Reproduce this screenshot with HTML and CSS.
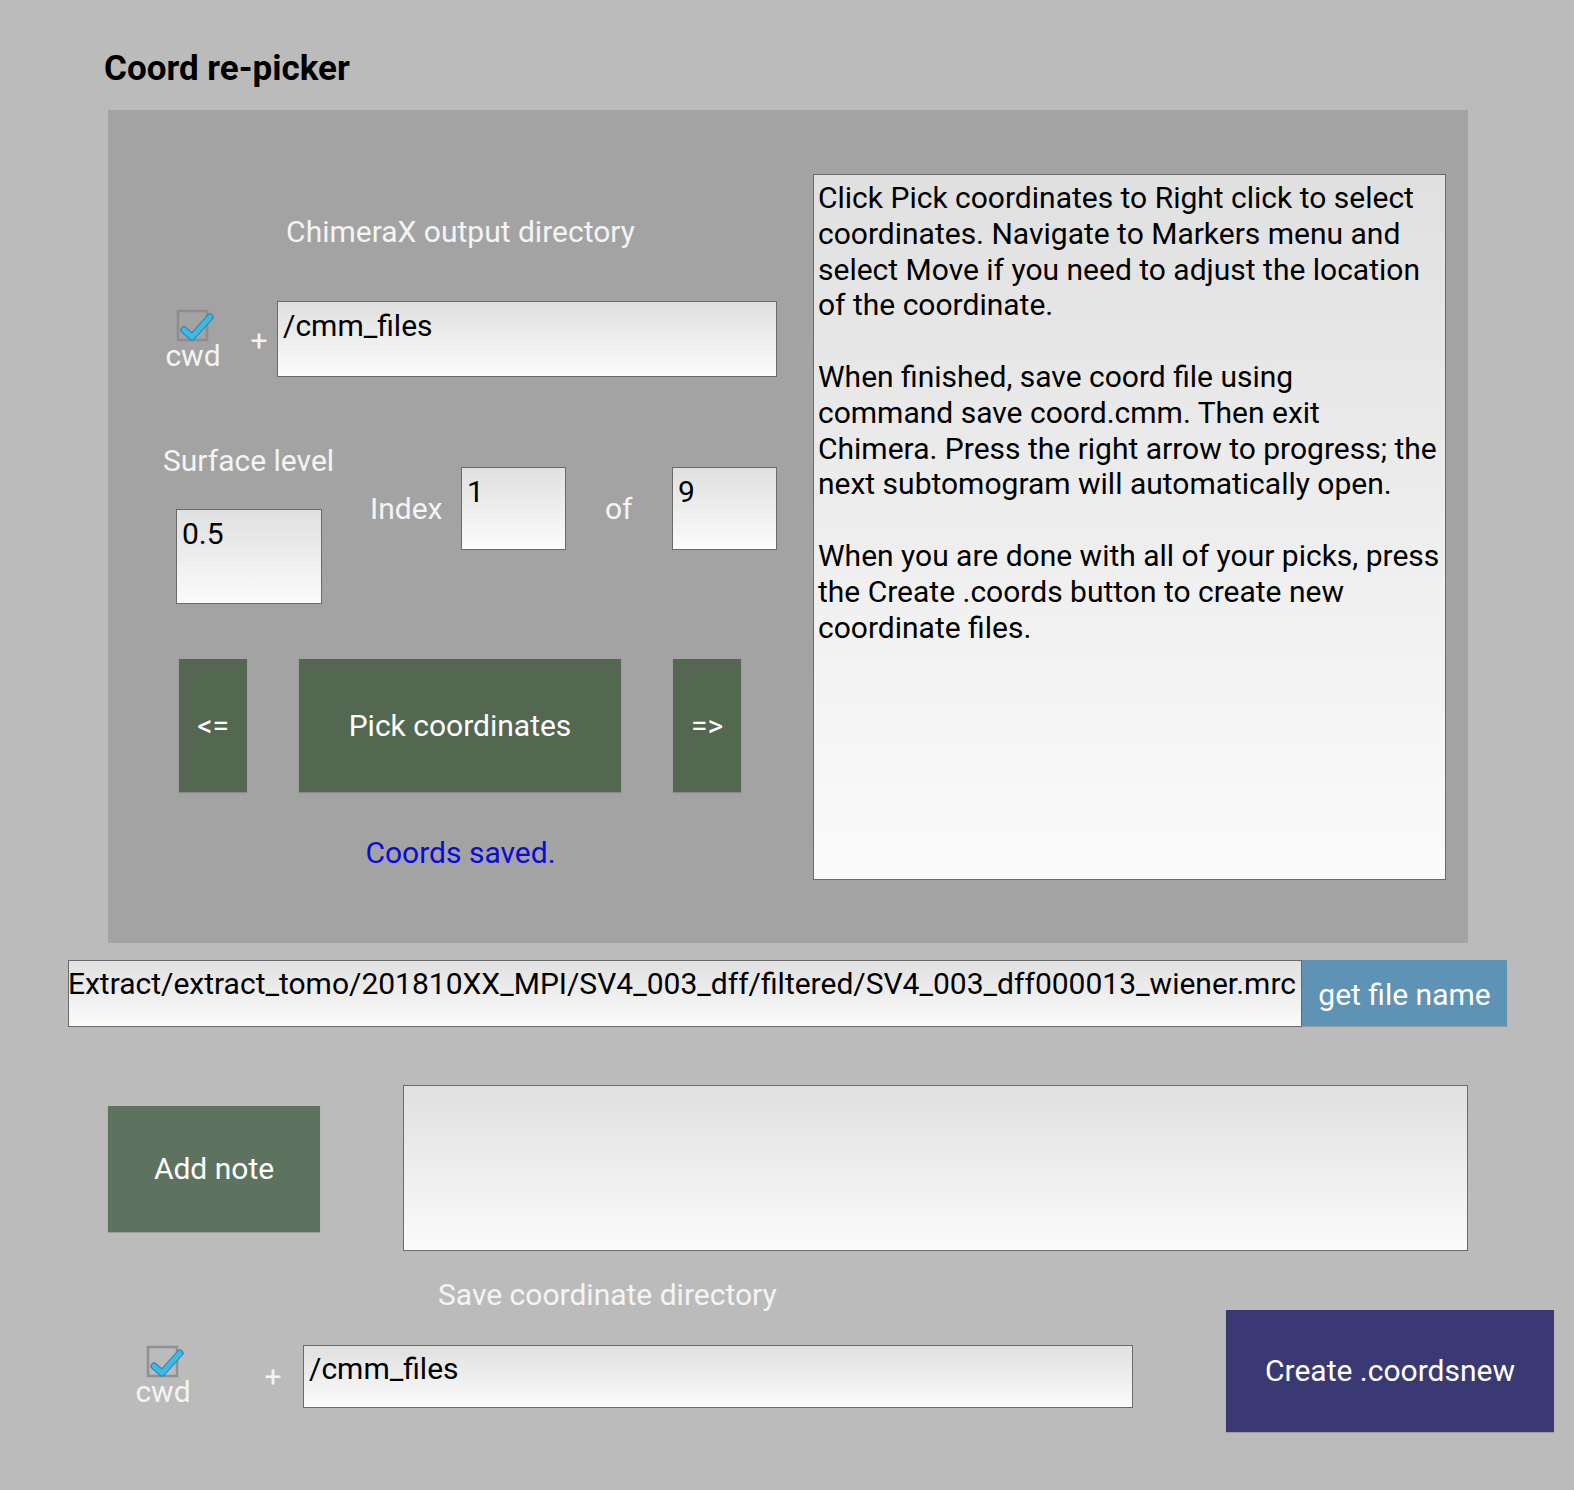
FILE: index.html
```
<!DOCTYPE html>
<html>
<head>
<meta charset="utf-8">
<title>Coord re-picker</title>
<link rel="stylesheet" href="styles.css">
</head>
<body>
<div class="app">
  <h1 class="title">Coord re-picker</h1>

  <section class="panel">
    <div class="left">
      <div class="label dir-label">ChimeraX output directory</div>
      <div class="dir-row">
        <div class="cwd">
          <svg class="check" width="44" height="36" viewBox="0 0 44 36">
            <rect x="7" y="4" width="29" height="29" fill="none" stroke="#8a8a8a" stroke-width="2.5" opacity="0.85"/>
            <path d="M13 23 L21 30 L39 10" fill="none" stroke="#2a7fa8" stroke-width="7" stroke-linecap="round" stroke-linejoin="round"/>
            <path d="M13 23 L21 30 L39 10" fill="none" stroke="#3db8e8" stroke-width="5" stroke-linecap="round" stroke-linejoin="round"/>
          </svg>
          <span class="cwd-text">cwd</span>
        </div>
        <span class="plus">+</span>
        <div class="input dir-input">/cmm_files</div>
      </div>

      <div class="level-row">
        <div class="surface">
          <div class="label">Surface level</div>
          <div class="input level-input">0.5</div>
        </div>
        <div class="label index-label">Index</div>
        <div class="input num-input">1</div>
        <div class="label of-label">of</div>
        <div class="input num-input">9</div>
      </div>

      <div class="nav-row">
        <button class="btn green small">&lt;=</button>
        <button class="btn green pick">Pick coordinates</button>
        <button class="btn green small">=&gt;</button>
      </div>

      <div class="status">Coords saved.</div>
    </div>

    <div class="input help">
      <span class="line">Click Pick coordinates to Right click to select</span>
      <span class="line">coordinates. Navigate to Markers menu and</span>
      <span class="line">select Move if you need to adjust the location</span>
      <span class="line">of the coordinate.</span>
      <span class="line">&nbsp;</span>
      <span class="line">When finished, save coord file using</span>
      <span class="line">command save coord.cmm. Then exit</span>
      <span class="line">Chimera. Press the right arrow to progress; the</span>
      <span class="line">next subtomogram will automatically open.</span>
      <span class="line">&nbsp;</span>
      <span class="line">When you are done with all of your picks, press</span>
      <span class="line">the Create .coords button to create new</span>
      <span class="line">coordinate files.</span>
    </div>
  </section>

  <div class="file-row">
    <div class="input file-input"><span class="file-text">/Extract/extract_tomo/201810XX_MPI/SV4_003_dff/filtered/SV4_003_dff000013_wiener.mrc</span></div>
    <button class="btn blue">get file name</button>
  </div>

  <div class="note-row">
    <button class="btn green-light note-btn">Add note</button>
    <div class="input note-input"></div>
  </div>

  <div class="label save-label">Save coordinate directory</div>

  <div class="save-row">
    <div class="cwd cwd-bottom">
      <svg class="check" width="44" height="36" viewBox="0 0 44 36">
        <rect x="7" y="4" width="29" height="29" fill="none" stroke="#8a8a8a" stroke-width="2.5" opacity="0.85"/>
        <path d="M13 23 L21 30 L39 10" fill="none" stroke="#2a7fa8" stroke-width="7" stroke-linecap="round" stroke-linejoin="round"/>
        <path d="M13 23 L21 30 L39 10" fill="none" stroke="#3db8e8" stroke-width="5" stroke-linecap="round" stroke-linejoin="round"/>
      </svg>
      <span class="cwd-text">cwd</span>
    </div>
    <span class="plus plus-bottom">+</span>
    <div class="input save-input">/cmm_files</div>
    <button class="btn navy create-btn">Create .coordsnew</button>
  </div>
</div>
</body>
</html>
```

FILE: styles.css
```
* { box-sizing: border-box; }

html, body {
  margin: 0;
  padding: 0;
}

body {
  background: #bbbbbb;
  font-family: Roboto, "Liberation Sans", sans-serif;
  width: 1574px;
  height: 1490px;
  overflow: hidden;
}

.app {
  display: flex;
  flex-direction: column;
  align-items: flex-start;
}

.title {
  margin: 49px 0 0 104px;
  font-size: 35px;
  line-height: 40px;
  font-weight: 700;
  color: #000;
}

.panel {
  margin: 21px 0 0 108px;
  width: 1360px;
  height: 833px;
  background: #a3a3a3;
  display: flex;
}

.left {
  width: 705px;
  padding-top: 105px;
  display: flex;
  flex-direction: column;
}

.label {
  color: #f4f4f4;
  font-size: 30px;
  line-height: 34px;
  white-space: nowrap;
}

.dir-label {
  text-align: center;
}

.input {
  background: linear-gradient(#e0e0e0, #fbfbfb);
  border: 1.5px solid #6a6a6a;
  color: #000;
  font-size: 30px;
  line-height: 34px;
  padding: 7px 6px 5px 5px;
  white-space: nowrap;
}

.dir-row {
  margin-top: 52px;
  display: flex;
  align-items: flex-start;
}

.cwd {
  width: 70px;
  margin-left: 50px;
  margin-top: 6px;
  display: flex;
  flex-direction: column;
  align-items: center;
}

.check {
  display: block;
}

.cwd-text {
  color: #f4f4f4;
  font-size: 30px;
  line-height: 28px;
  margin-top: -1px;
}

.plus {
  width: 30px;
  margin-left: 16px;
  margin-top: 23px;
  text-align: center;
  color: #f4f4f4;
  font-size: 30px;
  line-height: 34px;
}

.dir-input {
  margin-left: 3px;
  width: 500px;
  height: 76px;
}

.level-row {
  margin-top: 67px;
  display: flex;
  align-items: flex-start;
}

.surface {
  width: 180px;
  margin-left: 55px;
  display: flex;
  flex-direction: column;
}

.level-input {
  margin-left: 13px;
  margin-top: 31px;
  width: 146px;
  height: 95px;
}

.index-label {
  margin-left: 27px;
  margin-top: 48px;
  width: 91px;
}

.num-input {
  margin-top: 23px;
  width: 105px;
  height: 83px;
}

.of-label {
  margin-top: 48px;
  width: 106px;
  padding-left: 39px;
}

.nav-row {
  margin-top: 55px;
  margin-left: 71px;
  display: flex;
  gap: 52px;
}

.btn {
  border: none;
  color: #ffffff;
  font-family: Roboto, "Liberation Sans", sans-serif;
  font-size: 30px;
  line-height: 34px;
  padding: 0;
  display: flex;
  align-items: center;
  justify-content: center;
  box-shadow: 0 1px 1px rgba(0,0,0,0.15);
}

.green { background: #536751; }
.green-light { background: #5e735f; }
.blue { background: #5e93b6; }
.navy { background: #3b3974; }

.small {
  width: 68px;
  height: 133px;
}

.pick {
  width: 322px;
  height: 133px;
}

.status {
  margin-top: 44px;
  text-align: center;
  color: #0b0bd9;
  font-size: 30px;
  line-height: 34px;
}

.help {
  margin-top: 64px;
  width: 633px;
  height: 706px;
  padding: 5px 4px;
  line-height: 35.8px;
  display: flex;
  flex-direction: column;
}

.line {
  display: block;
  white-space: nowrap;
}

.file-row {
  margin: 17px 0 0 68px;
  display: flex;
}

.file-input {
  width: 1234px;
  height: 67px;
  overflow: hidden;
  display: flex;
  justify-content: flex-end;
  padding: 6px 5px 0 0;
}

.file-text {
  flex: none;
}

.file-row .blue {
  width: 205px;
  height: 66px;
  padding-top: 4px;
}

.note-row {
  margin: 58px 0 0 108px;
  display: flex;
  align-items: flex-start;
}

.note-btn {
  margin-top: 21px;
  width: 212px;
  height: 126px;
}

.note-input {
  margin-left: 83px;
  width: 1065px;
  height: 166px;
}

.save-label {
  margin: 29px 0 0 438px;
  line-height: 30px;
}

.save-row {
  display: flex;
  align-items: flex-start;
}

.cwd-bottom {
  margin-left: 128px;
  margin-top: 33px;
}

.plus-bottom {
  margin-left: 60px;
  margin-top: 50px;
}

.save-input {
  margin-top: 35px;
  margin-left: 15px;
  width: 830px;
  height: 63px;
  padding-top: 6px;
}

.create-btn {
  margin-left: 93px;
  width: 328px;
  height: 122px;
}
```
